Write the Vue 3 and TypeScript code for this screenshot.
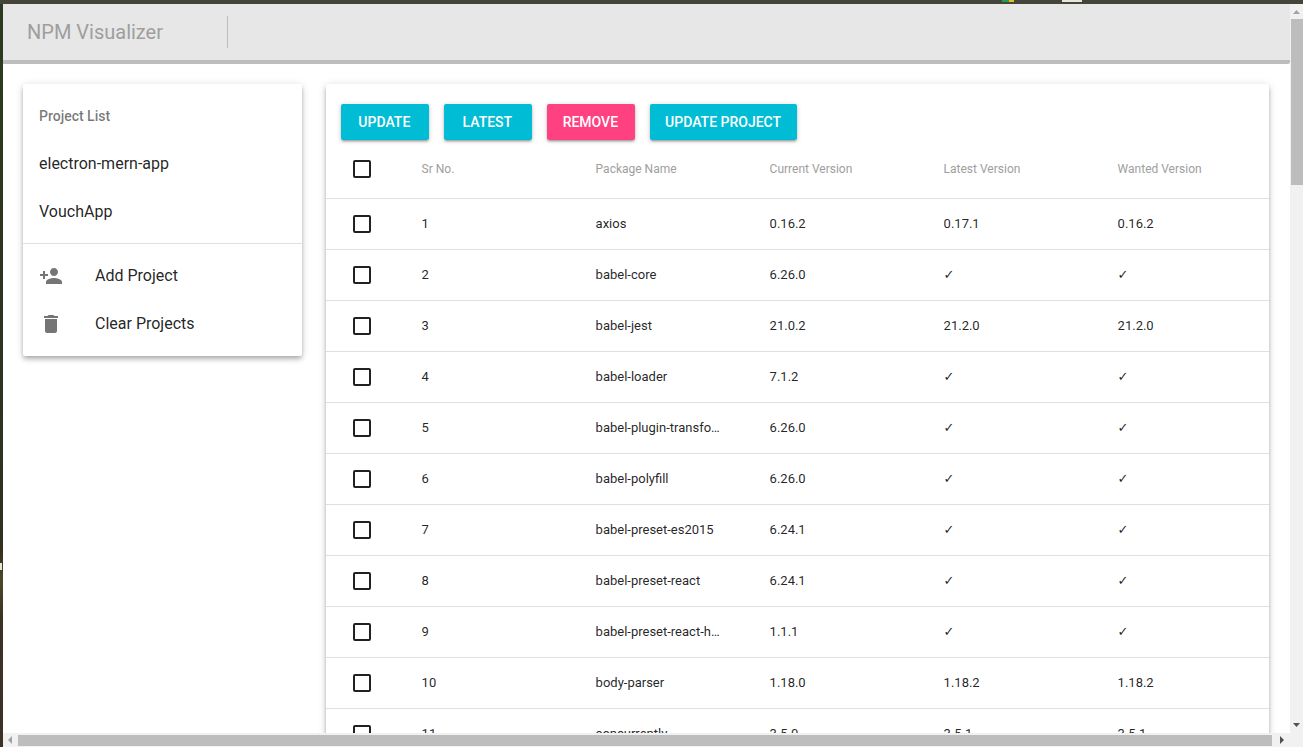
<template>
  <div class="window">
    <div class="desk-top">
      <span class="tray tray-color"></span>
      <span class="tray tray-light"></span>
    </div>
    <div class="window-body">
      <div class="desk-left">
        <span class="notch"></span>
      </div>
      <div class="viewport">
        <header class="app-bar">
          <div class="brand">NPM Visualizer</div>
        </header>
        <main class="content">
          <aside class="side paper">
            <div class="subheader">Project List</div>
            <div v-for="p in projects" :key="p" class="side-item"><span class="label">{{ p }}</span></div>
            <div class="divider"></div>
            <div class="side-actions">
              <div class="side-item">
                <svg class="icon" viewBox="0 0 24 24"><path d="M15 12c2.21 0 4-1.79 4-4s-1.79-4-4-4-4 1.79-4 4 1.79 4 4 4zm-9-2V7H4v3H1v2h3v3h2v-3h3v-2H6zm9 4c-2.67 0-8 1.34-8 4v2h16v-2c0-2.66-5.33-4-8-4z" /></svg>
                <span class="label">Add Project</span>
              </div>
              <div class="side-item">
                <svg class="icon" viewBox="0 0 24 24"><path d="M6 19c0 1.1.9 2 2 2h8c1.1 0 2-.9 2-2V7H6v12zM19 4h-3.5l-1-1h-5l-1 1H5v2h14V4z" /></svg>
                <span class="label">Clear Projects</span>
              </div>
            </div>
          </aside>
          <section class="packages paper">
            <div class="toolbar">
              <button class="btn">Update</button>
              <button class="btn">Latest</button>
              <button class="btn danger">Remove</button>
              <button class="btn">Update Project</button>
            </div>
            <div class="row head">
              <span class="check"></span>
              <span>Sr No.</span>
              <span>Package Name</span>
              <span>Current Version</span>
              <span>Latest Version</span>
              <span>Wanted Version</span>
            </div>
            <div v-for="(pkg, i) in packages" :key="pkg.name" class="row body-row">
              <span class="check"></span>
              <span class="cell">{{ i + 1 }}</span>
              <span class="cell name">{{ pkg.name }}</span>
              <span class="cell">{{ pkg.current }}</span>
              <span class="cell" :class="{ tick: !pkg.latest }">{{ pkg.latest || '✓' }}</span>
              <span class="cell" :class="{ tick: !pkg.wanted }">{{ pkg.wanted || '✓' }}</span>
            </div>
          </section>
        </main>
      </div>
      <div class="vbar">
        <svg class="arrow" viewBox="0 0 13 15"><polygon points="3,10 10,10 6.5,6" /></svg>
        <div class="vthumb"></div>
        <svg class="arrow vdown" viewBox="0 0 13 15"><polygon points="3,5 10,5 6.5,9" /></svg>
      </div>
    </div>
    <div class="window-foot">
      <div class="desk-left foot"></div>
      <div class="hbar">
        <svg class="harrow" viewBox="0 0 15 14"><polygon points="9,3 9,11 5,7" /></svg>
        <div class="hthumb"></div>
        <svg class="harrow hright" viewBox="0 0 18 14"><polygon points="8,3 8,11 12,7" /></svg>
      </div>
    </div>
  </div>
</template>

<script setup lang="ts">
interface Pkg {
  name: string
  current: string
  latest?: string
  wanted?: string
}

const projects = ['electron-mern-app', 'VouchApp']

const packages: Pkg[] = [
  { name: 'axios', current: '0.16.2', latest: '0.17.1', wanted: '0.16.2' },
  { name: 'babel-core', current: '6.26.0' },
  { name: 'babel-jest', current: '21.0.2', latest: '21.2.0', wanted: '21.2.0' },
  { name: 'babel-loader', current: '7.1.2' },
  { name: 'babel-plugin-transform-runtime', current: '6.26.0' },
  { name: 'babel-polyfill', current: '6.26.0' },
  { name: 'babel-preset-es2015', current: '6.24.1' },
  { name: 'babel-preset-react', current: '6.24.1' },
  { name: 'babel-preset-react-hmre', current: '1.1.1' },
  { name: 'body-parser', current: '1.18.0', latest: '1.18.2', wanted: '1.18.2' },
  { name: 'concurrently', current: '3.5.0', latest: '3.5.1', wanted: '3.5.1' },
]
</script>

<style>
html,
body {
  margin: 0;
  height: 100%;
  overflow: hidden;
  background: #fff;
}
</style>

<style scoped>
.window {
  display: flex;
  flex-direction: column;
  height: 747px;
  font-family: Roboto, 'Liberation Sans', sans-serif;
}
.desk-top {
  position: relative;
  flex: 0 0 4px;
  background: #44443b;
}
.tray {
  position: absolute;
  top: 0;
}
.tray-color {
  left: 1002px;
  width: 12px;
  height: 2px;
  background: linear-gradient(90deg, #1f9d55 60%, #e8b923 60%);
}
.tray-light {
  left: 1062px;
  width: 20px;
  height: 2px;
  background: #e8e4d8;
}
.window-body {
  flex: 1;
  display: flex;
  min-height: 0;
}
.desk-left {
  position: relative;
  flex: 0 0 3px;
  background: linear-gradient(180deg, #2c3a20 0%, #2e3420 40%, #33301f 75%, #4a4a28 79%, #3a3324 84%, #3b3226 100%);
}
.desk-left.foot {
  background: #3b3226;
}
.notch {
  position: absolute;
  top: 559px;
  left: 0;
  width: 2px;
  height: 7px;
  background: #e4e4dc;
}
.viewport {
  flex: 1;
  min-width: 0;
  overflow: hidden;
  background: #fff;
}
.app-bar {
  height: 56px;
  background: #e7e7e7;
  border-bottom: 4px solid #bdbdbd;
  border-bottom-right-radius: 2px;
  display: flex;
  align-items: center;
}
.brand {
  box-sizing: border-box;
  width: 225px;
  height: 32px;
  margin-top: -1px;
  padding-left: 24px;
  border-right: 1px solid #bdbdbd;
  font-size: 20px;
  line-height: 32px;
  color: #9e9e9e;
}
.content {
  display: flex;
  align-items: flex-start;
  gap: 24px;
  padding: 20px;
}
.paper {
  background: #fff;
  border-radius: 2px;
  box-shadow: 0 2px 4px -1px rgba(0, 0, 0, 0.2), 0 4px 5px rgba(0, 0, 0, 0.14), 0 1px 10px rgba(0, 0, 0, 0.12);
}
.side {
  flex: 0 0 278.6px;
  padding-top: 8px;
}
.subheader {
  height: 48px;
  padding-left: 16px;
  font-size: 14px;
  font-weight: 500;
  line-height: 48px;
  color: rgba(0, 0, 0, 0.54);
}
.side-item {
  display: flex;
  align-items: center;
  height: 48px;
  padding-left: 16px;
  font-size: 16px;
  color: rgba(0, 0, 0, 0.87);
}
.label {
  margin-bottom: 2px;
}
.divider {
  height: 1px;
  margin-top: 7px;
  background: #e0e0e0;
}
.side-actions {
  padding: 8px 0;
}
.icon {
  width: 24px;
  height: 24px;
  margin-right: 32px;
  fill: #757575;
}
.packages {
  flex: 0 0 943.6px;
  padding-top: 20px;
}
.toolbar {
  display: flex;
  gap: 15px;
  padding-left: 15px;
}
.btn {
  min-width: 88px;
  height: 36px;
  padding: 0 16px 0 15.5px;
  border: 0;
  border-radius: 2px;
  background: #00bcd4;
  color: #fff;
  font-family: inherit;
  font-size: 14px;
  font-weight: 500;
  text-transform: uppercase;
  box-shadow: 0 1px 5px rgba(0, 0, 0, 0.2), 0 2px 2px rgba(0, 0, 0, 0.14), 0 3px 1px -2px rgba(0, 0, 0, 0.12);
}
.btn.danger {
  background: #ff4081;
}
.row {
  display: grid;
  grid-template-columns: 96px 174px 174px 174px 174px 151.6px;
  align-items: center;
  height: 50px;
  border-bottom: 1px solid #e0e0e0;
  font-size: 13px;
  color: rgba(0, 0, 0, 0.87);
}
.row.head {
  height: 58px;
  font-size: 12px;
  color: #9e9e9e;
}
.cell {
  margin-bottom: 2px;
}
.check {
  box-sizing: border-box;
  width: 18px;
  height: 18px;
  margin-left: 27.4px;
  border: 2px solid #212121;
  border-radius: 2px;
}
.name {
  overflow: hidden;
  width: 126px;
  white-space: nowrap;
  text-overflow: ellipsis;
}
.tick {
  font-family: 'DejaVu Sans', sans-serif;
}
.vbar {
  flex: 0 0 13px;
  display: flex;
  flex-direction: column;
  background: #f1f1f1;
}
.arrow {
  display: block;
  flex: 0 0 15px;
  width: 13px;
  height: 15px;
  fill: #a3a3a3;
}
.vthumb {
  flex: 0 0 166px;
  margin-left: 1px;
  background: #bdbdbd;
}
.vdown {
  margin-top: auto;
  fill: #505050;
}
.window-foot {
  flex: 0 0 14px;
  display: flex;
}
.hbar {
  flex: 1;
  display: flex;
  background: #f1f1f1;
}
.harrow {
  flex: 0 0 15px;
  width: 15px;
  height: 14px;
  fill: #a3a3a3;
}
.hthumb {
  flex: 0 0 1254px;
  height: 11px;
  margin-top: 2px;
  background: #bdbdbd;
}
.hright {
  flex: 0 0 18px;
  width: 18px;
  fill: #505050;
}
</style>
